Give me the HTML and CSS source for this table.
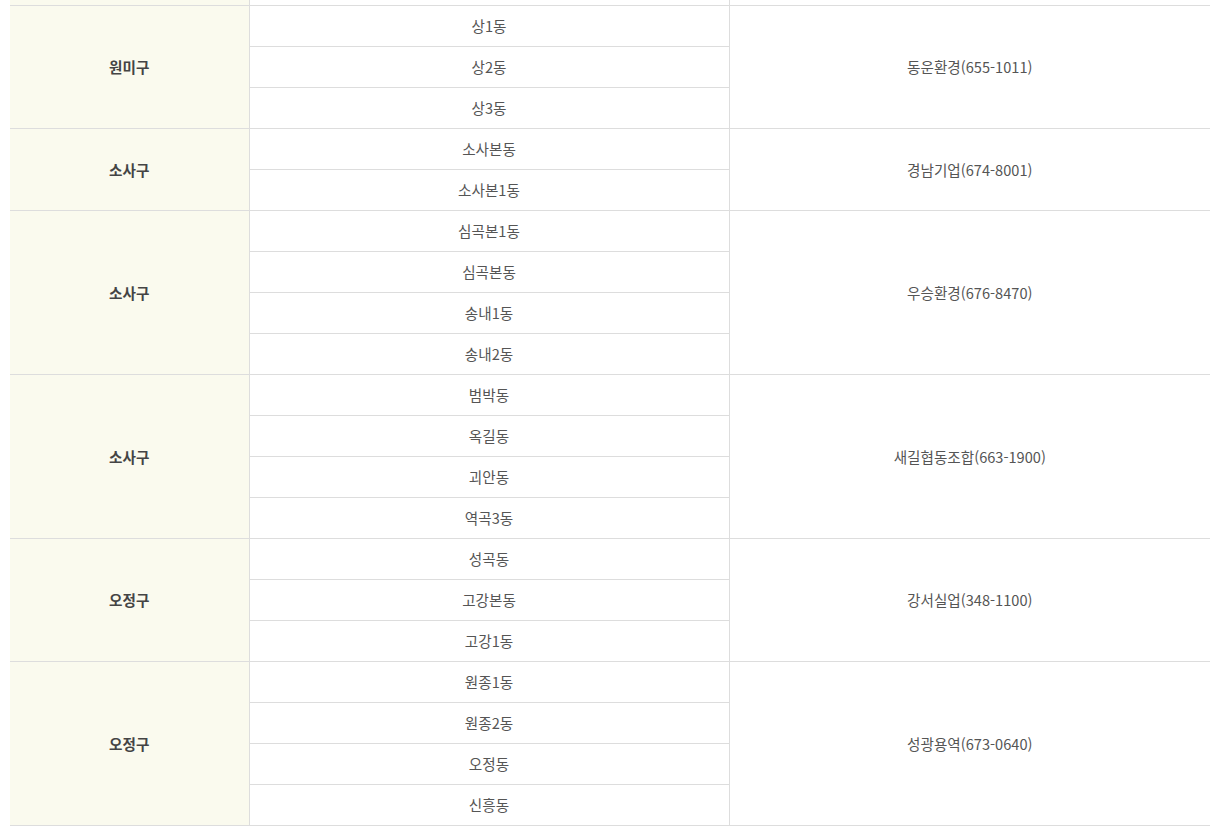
FILE: index.html
```html
<!DOCTYPE html>
<html lang="ko">
<head>
<meta charset="utf-8">
<link rel="stylesheet" href="styles.css">
</head>
<body>
<div class="wrap">
<table class="tbl">
<colgroup><col class="c1"><col class="c2"><col class="c3"></colgroup>
<tbody>
<tr><th class="gu"></th><td></td><td class="co"></td></tr>
<tr><th class="gu" rowspan="3">원미구</th><td>상1동</td><td class="co" rowspan="3">동운환경(655-1011)</td></tr>
<tr><td>상2동</td></tr>
<tr><td>상3동</td></tr>
<tr><th class="gu" rowspan="2">소사구</th><td>소사본동</td><td class="co" rowspan="2">경남기업(674-8001)</td></tr>
<tr><td>소사본1동</td></tr>
<tr><th class="gu" rowspan="4">소사구</th><td>심곡본1동</td><td class="co" rowspan="4">우승환경(676-8470)</td></tr>
<tr><td>심곡본동</td></tr>
<tr><td>송내1동</td></tr>
<tr><td>송내2동</td></tr>
<tr><th class="gu" rowspan="4">소사구</th><td>범박동</td><td class="co" rowspan="4">새길협동조합(663-1900)</td></tr>
<tr><td>옥길동</td></tr>
<tr><td>괴안동</td></tr>
<tr><td>역곡3동</td></tr>
<tr><th class="gu" rowspan="3">오정구</th><td>성곡동</td><td class="co" rowspan="3">강서실업(348-1100)</td></tr>
<tr><td>고강본동</td></tr>
<tr><td>고강1동</td></tr>
<tr><th class="gu" rowspan="4">오정구</th><td>원종1동</td><td class="co" rowspan="4">성광용역(673-0640)</td></tr>
<tr><td>원종2동</td></tr>
<tr><td>오정동</td></tr>
<tr><td>신흥동</td></tr>
</tbody>
</table>
</div>
</body>
</html>
```
FILE: styles.css
```css
html, body {
  margin: 0;
  padding: 0;
  background: #fff;
}
body {
  font-family: "Noto Sans CJK KR", "Noto Sans", sans-serif;
  font-size: 14.6px;
  color: #555;
}
.wrap {
  padding: 0 10px;
  overflow: hidden;
}
.tbl {
  width: 1200px;
  border-collapse: collapse;
  table-layout: fixed;
  margin-top: -36px;
}
.c1 { width: 239px; }
.c2 { width: 480px; }
.c3 { width: 481px; }
.tbl th, .tbl td {
  height: 40px;
  padding: 0;
  text-align: center;
  vertical-align: middle;
  border-bottom: 1px solid #ddd;
  border-top: 1px solid #ddd;
  line-height: 20px;
}
.tbl td {
  border-left: 1px solid #ddd;
  font-weight: 400;
}
.tbl th.gu {
  background: #fafaee;
  color: #444;
  font-weight: 700;
}
```
